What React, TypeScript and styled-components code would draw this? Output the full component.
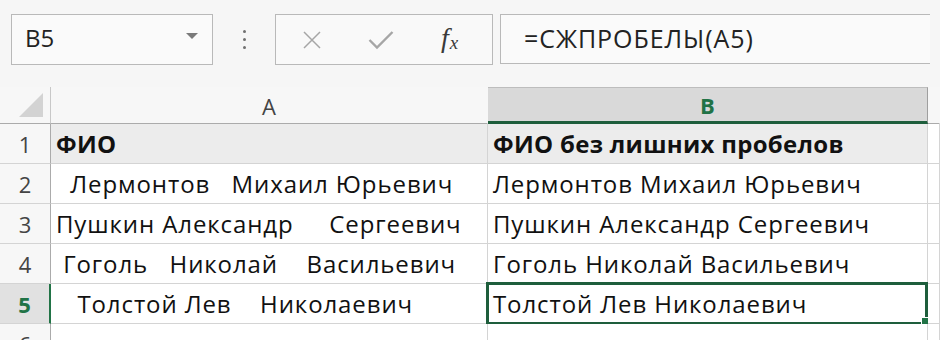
import React from "react";
import styled, { createGlobalStyle } from "styled-components";

const GlobalStyle = createGlobalStyle`
  body {
    margin: 0;
    background: #f6f6f6;
    font-family: "Open Sans", "Liberation Sans", sans-serif;
    overflow: hidden;
  }
`;

interface Row {
  n: number;
  a: string;
  b: string;
}

// column A keeps the raw names with their extra spaces
const rows: Row[] = [
  { n: 1, a: "ФИО", b: "ФИО без лишних пробелов" },
  { n: 2, a: "  Лермонтов   Михаил Юрьевич", b: "Лермонтов Михаил Юрьевич" },
  { n: 3, a: "Пушкин Александр     Сергеевич", b: "Пушкин Александр Сергеевич" },
  { n: 4, a: " Гоголь   Николай    Васильевич", b: "Гоголь Николай Васильевич" },
  { n: 5, a: "   Толстой Лев    Николаевич", b: "Толстой Лев Николаевич" },
  { n: 6, a: "", b: "" },
];

const App: React.FC = () => {
  return (
    <>
      <GlobalStyle />
      <Toolbar>
        <NameBox>
          <span>B5</span>
          <Caret />
        </NameBox>
        <Dots>
          <i />
          <i />
          <i />
        </Dots>
        <FuncBox>
          <svg width="20" height="18" viewBox="0 0 20 18">
            <path d="M2 1 L18 17 M18 1 L2 17" stroke="#a6a6a6" strokeWidth="1.5" fill="none" />
          </svg>
          <svg width="26" height="20" viewBox="0 0 26 20">
            <path d="M1.5 10 L9 17.5 L24.5 2" stroke="#a6a6a6" strokeWidth="2.4" fill="none" />
          </svg>
          <Fx>
            f<sub>x</sub>
          </Fx>
        </FuncBox>
        <FormulaBox>=СЖПРОБЕЛЫ(А5)</FormulaBox>
      </Toolbar>
      <Sheet>
        <Corner>
          <svg width="24" height="24" viewBox="0 0 24 24">
            <polygon points="24,0 24,24 0,24" fill="#d3d3d3" />
          </svg>
        </Corner>
        <ColHead>A</ColHead>
        <ColHead active>B</ColHead>
        <ColHead />
        {rows.map((r) => (
          <React.Fragment key={r.n}>
            <RowHead active={r.n === 5}>{r.n}</RowHead>
            <Cell filled={r.n === 1} bold={r.n === 1}>
              {r.a}
            </Cell>
            <Cell filled={r.n === 1} bold={r.n === 1} selected={r.n === 5}>
              {r.b}
            </Cell>
            <Cell />
          </React.Fragment>
        ))}
      </Sheet>
    </>
  );
};

export default App;

const Toolbar = styled.div`
  height: 87px;
  box-sizing: border-box;
  padding: 14px 0 0 11px;
  display: flex;
  align-items: flex-start;
  background: #f6f6f6;
`;

const NameBox = styled.div`
  width: 202px;
  height: 51px;
  box-sizing: border-box;
  border: 1px solid #b9b9b9;
  background: #fafafa;
  display: flex;
  align-items: center;
  justify-content: space-between;
  padding: 0 14px 4px 13px;
  font-size: 24px;
  color: #222;
`;

const Caret = styled.span`
  width: 0;
  height: 0;
  border-left: 6px solid transparent;
  border-right: 6px solid transparent;
  border-top: 6px solid #7a7a7a;
  margin-bottom: 4px;
`;

const Dots = styled.div`
  width: 62px;
  height: 51px;
  display: flex;
  flex-direction: column;
  align-items: center;
  justify-content: center;
  gap: 5px;
  & > i {
    width: 3px;
    height: 3px;
    border-radius: 50%;
    background: #707070;
  }
`;

const FuncBox = styled.div`
  width: 218px;
  height: 51px;
  box-sizing: border-box;
  border: 1px solid #b9b9b9;
  background: #f9f9f9;
  display: flex;
  align-items: center;
  padding: 0 0 0 26px;
  gap: 46px;
`;

const Fx = styled.span`
  font-family: "Liberation Serif", "DejaVu Serif", serif;
  font-style: italic;
  font-size: 28px;
  line-height: 1;
  color: #3a3a3a;
  margin-left: 1px;
  margin-bottom: 4px;
  & > sub {
    font-size: 19px;
    vertical-align: -2px;
    margin-left: 1px;
  }
`;

const FormulaBox = styled.div`
  margin-left: 7px;
  width: 430px;
  height: 50px;
  box-sizing: border-box;
  border: 1px solid #b9b9b9;
  border-right: none;
  background: #fafafa;
  display: flex;
  align-items: center;
  padding: 0 0 3px 23px;
  font-size: 25px;
  letter-spacing: 0.95px;
  color: #222;
`;

const Sheet = styled.div`
  display: grid;
  grid-template-columns: 51px 437px 440px 1fr;
  grid-template-rows: 37px repeat(6, 40px);
  background: #fff;
`;

const Corner = styled.div`
  box-sizing: border-box;
  border-right: 1px solid #c8c8c8;
  border-bottom: 1px solid #ababab;
  background: #f7f7f7;
  display: flex;
  align-items: flex-end;
  justify-content: flex-end;
  padding: 0 7px 6px 0;
`;

const ColHead = styled.div<{ active?: boolean }>`
  box-sizing: border-box;
  display: flex;
  align-items: center;
  justify-content: center;
  font-size: 22px;
  background: ${({ active }) => (active ? "#d9d9d9" : "#f7f7f7")};
  color: ${({ active }) => (active ? "#217346" : "#444")};
  font-weight: ${({ active }) => (active ? 700 : 400)};
  border-top: 1px solid ${({ active }) => (active ? "#bdbdbd" : "transparent")};
  border-right: 1px solid ${({ active }) => (active ? "#9f9f9f" : "transparent")};
  border-bottom: ${({ active }) => (active ? "3px solid #1e5e3c" : "1px solid #ababab")};
`;

const RowHead = styled.div<{ active?: boolean }>`
  box-sizing: border-box;
  display: flex;
  align-items: center;
  justify-content: center;
  font-size: 22px;
  background: ${({ active }) => (active ? "#e1e1e1" : "#f7f7f7")};
  color: ${({ active }) => (active ? "#217346" : "#444")};
  font-weight: ${({ active }) => (active ? 700 : 400)};
  border-right: ${({ active }) => (active ? "2px solid #217346" : "1px solid #ababab")};
  border-bottom: 1px solid #d4d4d4;
`;

const Cell = styled.div<{ filled?: boolean; bold?: boolean; selected?: boolean }>`
  position: relative;
  box-sizing: border-box;
  display: flex;
  align-items: center;
  padding: 0 5px;
  white-space: pre;
  overflow: hidden;
  font-size: 24px;
  letter-spacing: ${({ bold }) => (bold ? "0.3px" : "0.9px")};
  color: #111;
  font-weight: ${({ bold }) => (bold ? 700 : 400)};
  background: ${({ filled }) => (filled ? "#ececec" : "#fff")};
  border-right: 1px solid #d4d4d4;
  border-bottom: 1px solid #d4d4d4;
  ${({ selected }) =>
    selected &&
    `
    overflow: visible;
    &::before {
      content: "";
      position: absolute;
      left: -2px;
      top: -2px;
      right: -1px;
      bottom: -2px;
      border: 3px solid #1e5e3c;
      pointer-events: none;
    }
    &::after {
      content: "";
      position: absolute;
      right: -5px;
      bottom: -5px;
      width: 9px;
      height: 9px;
      background: #217346;
      border: 1px solid #fff;
    }
  `}
`;
